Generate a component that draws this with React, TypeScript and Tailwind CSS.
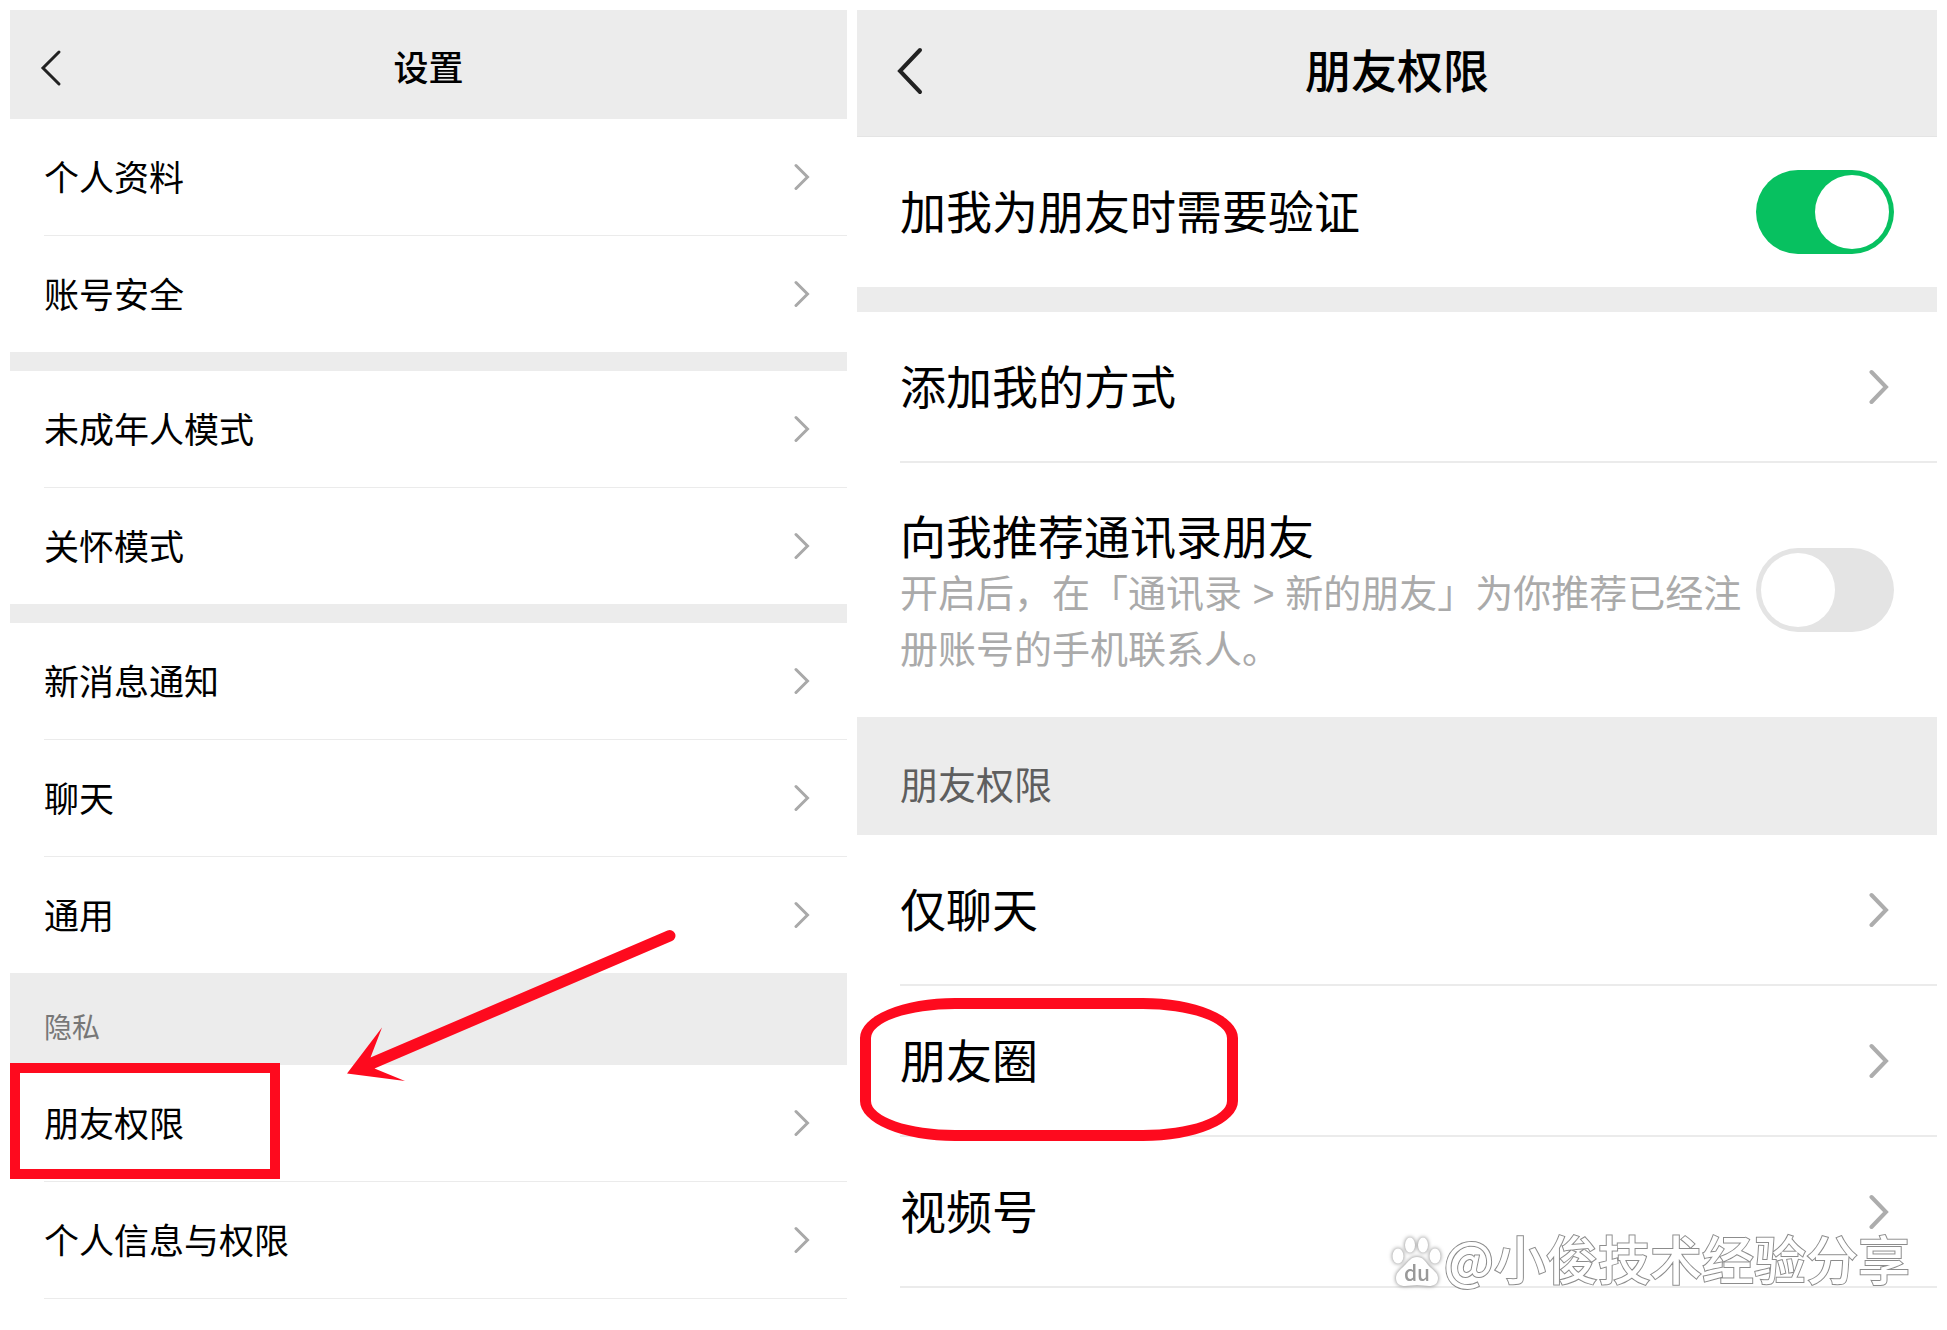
import { useState } from 'react';
import type { ReactNode } from 'react';
import clsx from 'clsx';

type Size = 'sm' | 'lg';

const settingsGroups = [
  ['个人资料', '账号安全'],
  ['未成年人模式', '关怀模式'],
  ['新消息通知', '聊天', '通用'],
];

function BackIcon({ size }: { size: Size }) {
  if (size === 'sm') {
    return (
      <svg width="22" height="38" viewBox="0 0 22 38" fill="none" stroke="#222" strokeWidth="3" strokeLinecap="round">
        <path d="M19 3 3 19l16 16" />
      </svg>
    );
  }
  return (
    <svg width="26" height="48" viewBox="0 0 26 48" fill="none" stroke="#222" strokeWidth="4" strokeLinecap="round">
      <path d="M23 3 3 24l20 21" />
    </svg>
  );
}

function ChevronIcon({ size }: { size: Size }) {
  if (size === 'sm') {
    return (
      <svg width="16" height="28" viewBox="0 0 16 28" fill="none" stroke="#a9a9a9" strokeWidth="3" strokeLinecap="round">
        <path d="M2 2.5 13.5 14 2 25.5" />
      </svg>
    );
  }
  return (
    <svg width="20" height="36" viewBox="0 0 20 36" fill="none" stroke="#adadad" strokeWidth="4" strokeLinecap="round">
      <path d="M2.5 3 17 18 2.5 33" />
    </svg>
  );
}

function Header({ title, size }: { title: string; size: Size }) {
  return (
    <header
      className={clsx(
        'grid items-center bg-[#ececec] text-black font-medium',
        size === 'sm'
          ? 'h-[109px] grid-cols-[80px_1fr_80px] pt-1.5 text-[35px]'
          : 'h-[127px] grid-cols-[100px_1fr_100px] border-b border-[#e4e4e4] pb-1 text-[46px]'
      )}
    >
      <button type="button" aria-label="返回" className={size === 'sm' ? 'pl-[30px]' : 'pl-10'}>
        <BackIcon size={size} />
      </button>
      <h1 className="pt-0.5 text-center leading-none">{title}</h1>
    </header>
  );
}

function Row({ label, size, divider }: { label: string; size: Size; divider: boolean }) {
  return (
    <button
      type="button"
      className={clsx(
        'flex w-full items-center justify-between border-[#ebebeb] text-left leading-none text-black',
        size === 'sm' ? 'pr-[37px] text-[35px]' : 'pr-12 text-[46px]',
        size === 'sm' && (divider ? 'h-[117px] border-b' : 'h-[116px]'),
        size === 'lg' && (divider ? 'h-[151px] border-b-2' : 'h-[150px]')
      )}
    >
      <span className="pt-0.5">{label}</span>
      <ChevronIcon size={size} />
    </button>
  );
}

function Switch({ id, checked, onChange }: { id: string; checked: boolean; onChange: (v: boolean) => void }) {
  return (
    <input
      id={id}
      type="checkbox"
      role="switch"
      checked={checked}
      onChange={(e) => onChange(e.target.checked)}
      className="flex h-[84px] w-[138px] shrink-0 cursor-pointer appearance-none items-center rounded-full bg-[#e4e4e4] px-[5px] before:size-[74px] before:rounded-full before:bg-white checked:justify-end checked:bg-[#07c160]"
    />
  );
}

function SectionTitle({ children, size }: { children: ReactNode; size: Size }) {
  return (
    <h2
      className={clsx(
        'flex items-center bg-[#ececec] pt-5 leading-none',
        size === 'sm' ? 'h-[92px] pl-[34px] text-[28px] text-[#777]' : 'h-[118px] pl-[43px] text-[38px] text-[#5e5e5e]'
      )}
    >
      {children}
    </h2>
  );
}

function Arrow() {
  return (
    <svg
      className="pointer-events-none absolute -top-[50px] left-[330px]"
      width="350"
      height="170"
      viewBox="340 923 350 170"
      fill="#fe0a1e"
    >
      <path d="M347 1073.500 382 1027.500 370.500 1057.500 667.500 930.500A5.500 5.500 0 0 1 672 941L374.500 1068.500 405 1081Z" />
    </svg>
  );
}

// 右下角水印
function Watermark() {
  return (
    <div className="pointer-events-none absolute right-[27px] bottom-0 flex items-end font-['Noto_Sans_CJK_SC',sans-serif] text-[52px] leading-none whitespace-nowrap text-white">
      <svg className="drop-shadow-[0_0_2px_#777]" width="52" height="54" viewBox="2 2 52 54" fill="#fff">
        <ellipse cx="9" cy="24" rx="5.500" ry="7.500" />
        <ellipse cx="21" cy="13" rx="5" ry="7.500" />
        <ellipse cx="34" cy="13" rx="5" ry="7.500" />
        <ellipse cx="46" cy="24" rx="5.500" ry="7.500" />
        <path d="M28 25c6 0 8 4 12 9 4 4 9 7 9 12 0 6-4 8-9 8-4 0-8-1-12-1s-8 1-12 1c-5 0-9-2-9-8 0-5 4-8 8-12 5-5 7-9 13-9Z" />
        <text x="28" y="49" textAnchor="middle" fontSize="21" fontWeight="500" fill="#999">
          du
        </text>
      </svg>
      <span className="pb-1 font-medium [-webkit-text-stroke:2px_#8c8c8c] [paint-order:stroke]">@小俊技术经验分享</span>
    </div>
  );
}

function SettingsPanel() {
  return (
    <section>
      <Header title="设置" size="sm" />
      {settingsGroups.map((items, gi) => (
        <div key={gi} className={clsx('pl-[34px]', gi > 0 && 'border-t-[19px] border-[#ececec]')}>
          {items.map((item, i) => (
            <Row key={item} label={item} size="sm" divider={i < items.length - 1} />
          ))}
        </div>
      ))}
      <div className="relative">
        <SectionTitle size="sm">隐私</SectionTitle>
        <div className="relative pl-[34px]">
          <Row label="朋友权限" size="sm" divider />
          <Row label="个人信息与权限" size="sm" divider />
          <span className="pointer-events-none absolute -top-0.5 left-0 h-[116px] w-[270px] border-[10px] border-[#fe0a1e]" />
        </div>
        <Arrow />
      </div>
    </section>
  );
}

function FriendPermissionPanel() {
  const [verify, setVerify] = useState(true);
  const [recommend, setRecommend] = useState(false);

  return (
    <section>
      <Header title="朋友权限" size="lg" />
      <div className="flex h-[150px] items-center justify-between px-[43px]">
        <label htmlFor="verify" className="pt-0.5 text-[46px] leading-none text-black">
          加我为朋友时需要验证
        </label>
        <Switch id="verify" checked={verify} onChange={setVerify} />
      </div>
      <div className="border-t-[25px] border-[#ececec] pl-[43px]">
        <Row label="添加我的方式" size="lg" divider />
        <div className="flex h-[254px] items-center pr-[43px]">
          <div className="flex-1 pt-2 leading-[56px]">
            <label htmlFor="recommend" className="block text-[46px] text-black">
              向我推荐通讯录朋友
            </label>
            <p className="text-[38px] leading-[56px] text-[#aaa]">
              开启后，在「通讯录 &gt; 新的朋友」为你推荐已经注册账号的手机联系人。
            </p>
          </div>
          <Switch id="recommend" checked={recommend} onChange={setRecommend} />
        </div>
      </div>
      <SectionTitle size="lg">朋友权限</SectionTitle>
      <div className="relative pl-[43px]">
        <Row label="仅聊天" size="lg" divider />
        <Row label="朋友圈" size="lg" divider />
        <Row label="视频号" size="lg" divider />
        <span className="pointer-events-none absolute top-[163px] left-[3px] h-[143px] w-[378px] rounded-[95px/40px] border-[11px] border-[#fe0a1e]" />
        <Watermark />
      </div>
    </section>
  );
}

export default function App() {
  return (
    <main className="grid min-h-screen grid-cols-[837fr_1080fr] gap-2.5 bg-white p-2.5 font-['Liberation_Sans','Noto_Sans_CJK_SC',sans-serif]">
      <SettingsPanel />
      <FriendPermissionPanel />
    </main>
  );
}
